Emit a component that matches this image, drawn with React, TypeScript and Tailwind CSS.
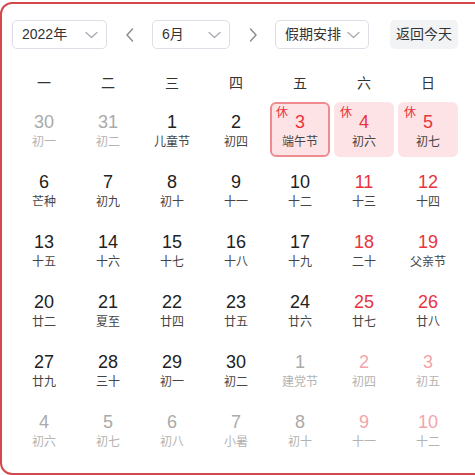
import React from "react";

const rows: [number, string, "prev" | "cur" | "next"][][] = [
  [[30, "初一", "prev"], [31, "初二", "prev"], [1, "儿童节", "cur"], [2, "初四", "cur"], [3, "端午节", "cur"], [4, "初六", "cur"], [5, "初七", "cur"]],
  [[6, "芒种", "cur"], [7, "初九", "cur"], [8, "初十", "cur"], [9, "十一", "cur"], [10, "十二", "cur"], [11, "十三", "cur"], [12, "十四", "cur"]],
  [[13, "十五", "cur"], [14, "十六", "cur"], [15, "十七", "cur"], [16, "十八", "cur"], [17, "十九", "cur"], [18, "二十", "cur"], [19, "父亲节", "cur"]],
  [[20, "廿二", "cur"], [21, "夏至", "cur"], [22, "廿四", "cur"], [23, "廿五", "cur"], [24, "廿六", "cur"], [25, "廿七", "cur"], [26, "廿八", "cur"]],
  [[27, "廿九", "cur"], [28, "三十", "cur"], [29, "初一", "cur"], [30, "初二", "cur"], [1, "建党节", "next"], [2, "初四", "next"], [3, "初五", "next"]],
  [[4, "初六", "next"], [5, "初七", "next"], [6, "初八", "next"], [7, "小暑", "next"], [8, "初十", "next"], [9, "十一", "next"], [10, "十二", "next"]],
];

const Chevron = () => (
  <svg width="13" height="8" viewBox="0 0 13 8" fill="none" stroke="#a8abb2" strokeWidth="1.3" strokeLinecap="round" strokeLinejoin="round">
    <path d="M1 1.5 L6.5 6.5 L12 1.5" />
  </svg>
);

const Select = ({ label, w }: { label: string; w: string }) => (
  <div className={`${w} h-[29px] flex items-center justify-between border border-[#dcdfe6] rounded-[5px] pl-[9px] pr-[8px] text-[14px] text-[#333]`}>
    <span>{label}</span>
    <Chevron />
  </div>
);

const Arrow = ({ dir }: { dir: "l" | "r" }) => (
  <div className="w-[45px] h-[29px] flex items-center justify-center">
    <svg width="14" height="16" viewBox="0 0 14 16" fill="none" stroke="#8a8d93" strokeWidth="1.5" strokeLinecap="round" strokeLinejoin="round">
      {dir === "l" ? <path d="M9.5 2 L4 8 L9.5 14" /> : <path d="M4.5 2 L10 8 L4.5 14" />}
    </svg>
  </div>
);

export default function App() {
  const week = ["一", "二", "三", "四", "五", "六", "日"];
  return (
    <div
      className="mt-[2px] w-[492px] h-[473px] border-2 border-[#d4484b] rounded-[12px] bg-white pt-[16px] pl-[10px]"
      style={{ fontFamily: '"Liberation Sans", "Noto Sans CJK SC", sans-serif' }}
    >
      <div className="flex items-center">
        <Select label="2022年" w="w-[95px]" />
        <Arrow dir="l" />
        <Select label="6月" w="w-[78px]" />
        <Arrow dir="r" />
        <Select label="假期安排" w="w-[94px]" />
        <div className="ml-[21px] w-[68px] h-[29px] flex items-center justify-center rounded-[5px] bg-[#f2f3f5] text-[14px] text-[#333]">
          返回今天
        </div>
      </div>
      <div className="mt-[19px] w-[448px] grid grid-cols-7 h-[30px] items-center text-[14px] text-[#333]">
        {week.map((w) => (
          <div key={w} className="text-center">{w}</div>
        ))}
      </div>
      <div className="mt-[2px] w-[448px] grid grid-cols-7">
        {rows.flat().map(([n, l, kind], i) => {
          const col = i % 7;
          const weekend = col >= 5;
          const rest = i >= 4 && i <= 6;
          const selected = i === 4;
          let numColor = "text-[#222]";
          let lunColor = "text-[#444]";
          if (kind !== "cur") {
            numColor = weekend ? "text-[#f2a5aa]" : "text-[#aaaaaa]";
            lunColor = "text-[#b3b3b3]";
          } else if (weekend || rest) {
            numColor = "text-[#e8343c]";
          }
          const bg = rest
            ? selected
              ? "bg-[#fde3e5] border-2 border-[#ef8a91]"
              : "bg-[#fde3e5] border-2 border-transparent"
            : "border-2 border-transparent";
          return (
            <div key={i} className="h-[60px] px-[2px] pt-[2px] pb-[3px]">
              <div className={`relative h-full rounded-[6px] ${bg} flex flex-col items-center pt-[7px]`}>
                {rest && (
                  <span className="absolute left-[4px] top-[1px] text-[12px] leading-[16px] text-[#e8343c]">休</span>
                )}
                <span className={`text-[18px] leading-[22px] ${numColor}`}>{n}</span>
                <span className={`text-[12px] leading-[18px] ${lunColor}`}>{l}</span>
              </div>
            </div>
          );
        })}
      </div>
    </div>
  );
}
